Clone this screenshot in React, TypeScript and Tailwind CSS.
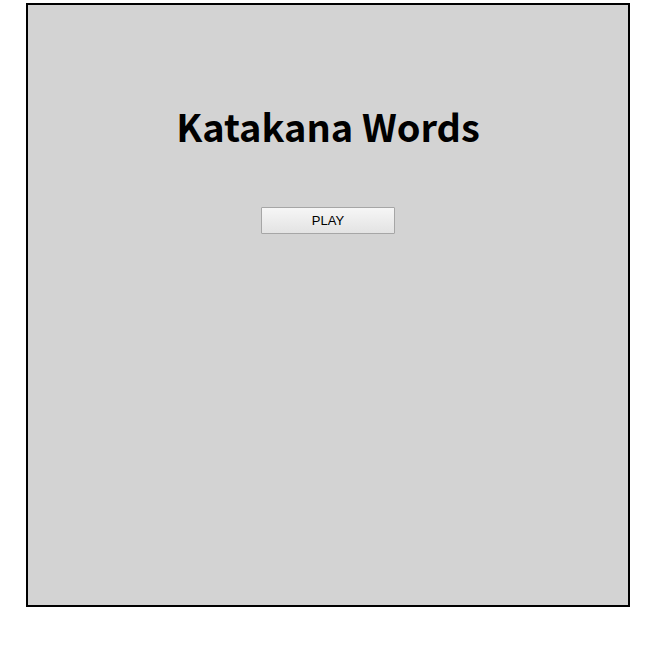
export default function App() {
  return (
    <div className="bg-white min-h-[647px] pt-[3px] pl-[26px]">
      <div className="w-[604px] h-[604px] border-2 border-black bg-[#d3d3d3] flex flex-col items-center">
        <h1 className="mt-[97px] text-[38px] leading-[48px] font-bold text-black font-['Noto_Sans_CJK_JP','Noto_Sans',sans-serif]">
          Katakana Words
        </h1>
        <button className="mt-[57px] w-[134px] h-[27px] border border-[#a6a6a6] rounded-[1px] bg-gradient-to-b from-[#f6f6f6] to-[#e3e3e3] text-[13px] text-black font-['Liberation_Sans',Arial,sans-serif]">
          PLAY
        </button>
      </div>
    </div>
  );
}
